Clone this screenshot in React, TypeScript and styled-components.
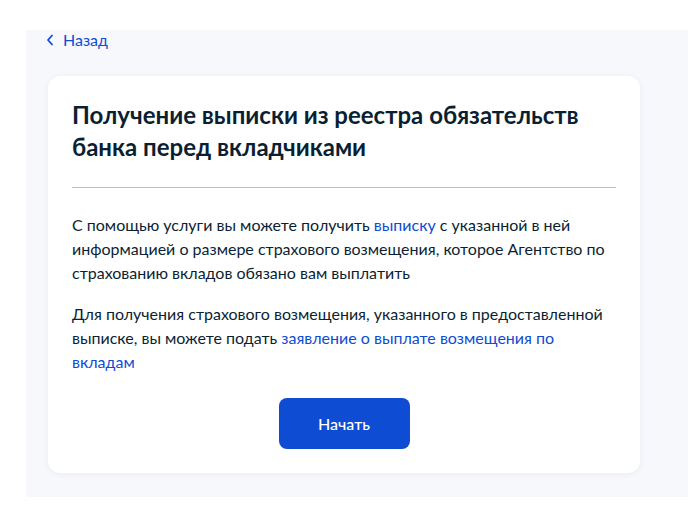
import styled, { createGlobalStyle } from "styled-components";

const GlobalStyle = createGlobalStyle`
  html, body {
    margin: 0;
    padding: 0;
    background: #ffffff;
  }
  body {
    font-family: Lato, "Noto Sans", sans-serif;
    color: #0b1f33;
    -webkit-font-smoothing: antialiased;
  }
`;

const Page = styled.div`
  padding: 30px 0 0 26px;
  width: 688px;
  box-sizing: border-box;
  overflow: hidden;
`;

const Panel = styled.main`
  background: #f6f8fc;
  padding: 0 48px 24px 22px;
  width: 710px;
  box-sizing: border-box;
`;

const BackLink = styled.a`
  display: inline-flex;
  align-items: center;
  gap: 9px;
  height: 20px;
  padding: 0;
  margin: 0 0 26px -2px;
  font-size: 16px;
  line-height: 20px;
  color: #0d4cd3;
  text-decoration: none;
  cursor: pointer;
`;

const Card = styled.section`
  width: 592px;
  box-sizing: border-box;
  background: #ffffff;
  border-radius: 12px;
  box-shadow: 0 1px 6px rgba(10, 40, 100, 0.06);
  padding: 23px 24px 24px;
`;

const Title = styled.h1`
  margin: 0;
  font-size: 24px;
  line-height: 32px;
  font-weight: 700;
  color: #0b1f33;
`;

const Divider = styled.hr`
  border: none;
  height: 1px;
  background: #b3c0de;
  margin: 24px 0 25px;
`;

const Paragraph = styled.p`
  margin: 0 0 17px;
  font-size: 16px;
  line-height: 24px;
  color: #0b1f33;
`;

const TextLink = styled.a`
  color: #0d4cd3;
  text-decoration: none;
  cursor: pointer;
`;

const Actions = styled.div`
  display: flex;
  justify-content: center;
  padding-top: 7px;
`;

const PrimaryButton = styled.button`
  width: 131px;
  height: 51px;
  border: none;
  border-radius: 8px;
  background: #0d4cd3;
  color: #ffffff;
  font-family: Lato, "Noto Sans", sans-serif;
  font-size: 16px;
  font-weight: 500;
  cursor: pointer;
`;

const Chevron = () => (
  <svg width="8" height="12" viewBox="0 0 8 12" fill="none">
    <path
      d="M6 1.5 L2 6 L6 10.5"
      stroke="#0d4cd3"
      strokeWidth="1.8"
      strokeLinecap="round"
      strokeLinejoin="round"
    />
  </svg>
);

export default function App() {
  return (
    <>
      <GlobalStyle />
      <Page>
        <Panel>
          <BackLink>
            <Chevron />
            Назад
          </BackLink>
          <Card>
            <Title>
              Получение выписки из реестра обязательств банка перед
              вкладчиками
            </Title>
            <Divider />
            <Paragraph>
              С помощью услуги вы можете получить{" "}
              <TextLink>выписку</TextLink> с указанной в ней информацией о
              размере страхового возмещения, которое Агентство по страхованию
              вкладов обязано вам выплатить
            </Paragraph>
            <Paragraph>
              Для получения страхового возмещения, указанного в
              предоставленной выписке, вы можете подать{" "}
              <TextLink>заявление о выплате возмещения по вкладам</TextLink>
            </Paragraph>
            <Actions>
              <PrimaryButton>Начать</PrimaryButton>
            </Actions>
          </Card>
        </Panel>
      </Page>
    </>
  );
}
